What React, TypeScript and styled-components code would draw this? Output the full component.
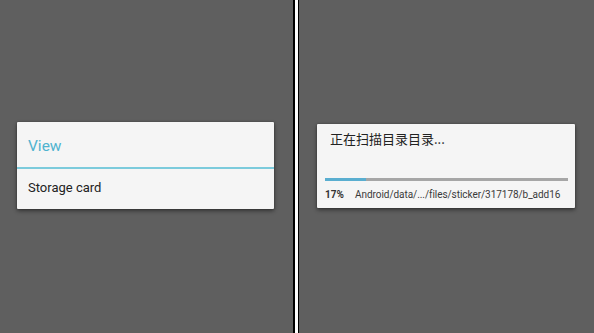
import React from 'react';
import styled, { createGlobalStyle } from 'styled-components';

const GlobalStyle = createGlobalStyle`
	html, body {
		margin: 0;
		padding: 0;
		background: #5f5f5f;
	}
	body {
		font-family: Roboto, "Noto Sans CJK SC", sans-serif;
	}
`;

const Screen = styled.div`
	display: flex;
	flex-direction: row;
	width: 594px;
	height: 333px;
	overflow: hidden;
`;

const Panel = styled.div<{ $width: number; $pad: string }>`
	width: ${({ $width }) => $width}px;
	flex-shrink: 0;
	display: flex;
	align-items: center;
	padding: ${({ $pad }) => $pad};
	box-sizing: border-box;
	background: #5f5f5f;
`;

const Divider = styled.div<{ $color: string; $width: number }>`
	width: ${({ $width }) => $width}px;
	flex-shrink: 0;
	background: ${({ $color }) => $color};
`;

const Dialog = styled.div<{ $height: number }>`
	width: 100%;
	height: ${({ $height }) => $height}px;
	background: #f5f5f5;
	border-radius: 1px;
	box-shadow: 0 2px 4px rgba(0, 0, 0, 0.45), 0 0 2px rgba(0, 0, 0, 0.3);
	display: flex;
	flex-direction: column;
`;

const ChooserTitle = styled.div`
	height: 45px;
	display: flex;
	align-items: center;
	padding: 2px 0 0 11px;
	box-sizing: border-box;
	color: #4fb3cf;
	font-size: 15.5px;
`;

const TitleRule = styled.div`
	height: 2px;
	background: #7ccbdc;
`;

const ChooserItem = styled.div`
	flex: 1;
	display: flex;
	align-items: center;
	padding: 0 0 4px 11px;
	color: #222;
	font-size: 13px;
`;

const ProgressTitle = styled.div`
	padding: 5px 0 0 13px;
	height: 30px;
	box-sizing: border-box;
	font-size: 13px;
	color: #222;
	font-family: "Noto Sans CJK SC", Roboto, sans-serif;
	line-height: 20px;
`;

const Track = styled.div`
	margin: 24px 7px 0 8px;
	height: 3px;
	background: #a6a6a6;
`;

const Fill = styled.div`
	height: 100%;
	background: #5aaed0;
`;

const StatusRow = styled.div`
	display: flex;
	align-items: center;
	margin: 8px 0 0 8px;
	font-size: 10px;
	color: #333;
	white-space: nowrap;
`;

const Percent = styled.span`
	font-weight: bold;
	width: 30px;
`;

const FilePath = styled.span`
	color: #3a3a3a;
	letter-spacing: -0.05px;
`;

export default function App() {
	const progress = 17;
	return (
		<>
			<GlobalStyle />
			<Screen>
				<Panel $width={293} $pad="0 19px 2px 17px">
					<Dialog $height={87}>
						<ChooserTitle>View</ChooserTitle>
						<TitleRule />
						<ChooserItem>Storage card</ChooserItem>
					</Dialog>
				</Panel>
				<Divider $color="#000" $width={2} />
				<Divider $color="#fff" $width={3} />
				<Divider $color="#000" $width={1} />
				<Panel $width={295} $pad="0 19px 2px 18px">
					<Dialog $height={84}>
						<ProgressTitle>正在扫描目录目录...</ProgressTitle>
						<Track>
							<Fill style={{ width: `${progress}%` }} />
						</Track>
						<StatusRow>
							<Percent>{progress}%</Percent>
							<FilePath>Android/data/.../files/sticker/317178/b_add16</FilePath>
						</StatusRow>
					</Dialog>
				</Panel>
			</Screen>
		</>
	);
}
